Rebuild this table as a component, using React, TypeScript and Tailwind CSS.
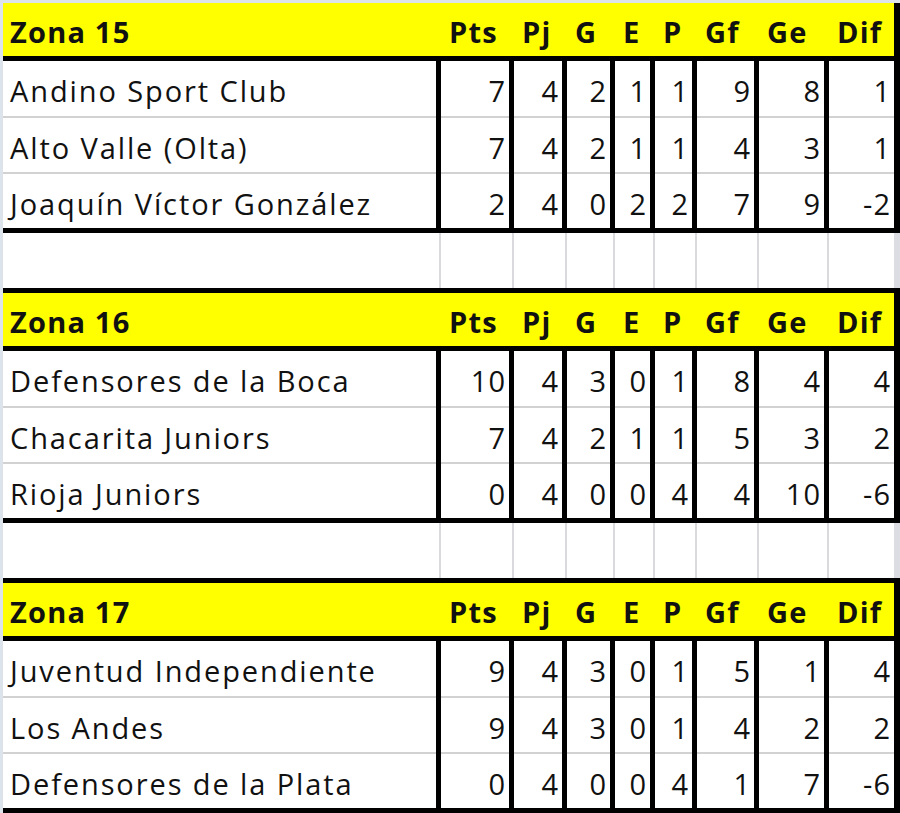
type Row = { name: string; stats: number[] };
type Zone = { title: string; rows: Row[] };

const zones: Zone[] = [
  {
    title: 'Zona 15',
    rows: [
      { name: 'Andino Sport Club', stats: [7, 4, 2, 1, 1, 9, 8, 1] },
      { name: 'Alto Valle (Olta)', stats: [7, 4, 2, 1, 1, 4, 3, 1] },
      { name: 'Joaquín Víctor González', stats: [2, 4, 0, 2, 2, 7, 9, -2] },
    ],
  },
  {
    title: 'Zona 16',
    rows: [
      { name: 'Defensores de la Boca', stats: [10, 4, 3, 0, 1, 8, 4, 4] },
      { name: 'Chacarita Juniors', stats: [7, 4, 2, 1, 1, 5, 3, 2] },
      { name: 'Rioja Juniors', stats: [0, 4, 0, 0, 4, 4, 10, -6] },
    ],
  },
  {
    title: 'Zona 17',
    rows: [
      { name: 'Juventud Independiente', stats: [9, 4, 3, 0, 1, 5, 1, 4] },
      { name: 'Los Andes', stats: [9, 4, 3, 0, 1, 4, 2, 2] },
      { name: 'Defensores de la Plata', stats: [0, 4, 0, 0, 4, 1, 7, -6] },
    ],
  },
];

const labels = ['Pts', 'Pj', 'G', 'E', 'P', 'Gf', 'Ge', 'Dif'];
// column widths including the 5px black divider on the left
const colW = ['w-[73px]', 'w-[53px]', 'w-[48px]', 'w-[40px]', 'w-[42px]', 'w-[62px]', 'w-[70px]', 'w-[70px]'];
// blank spacer row: gray gridlines sit on the right side of each column
const blankW = ['w-[73px]', 'w-[53px]', 'w-[48px]', 'w-[40px]', 'w-[42px]', 'w-[62px]', 'w-[70px]'];
const rowH = ['h-[57px] border-b-2', 'h-[56px] border-b-2', 'h-[54px]'];

function Header({ title }: { title: string }) {
  return (
    <div className="flex h-[53px] bg-[#ffff00] font-bold tracking-[1.2px]">
      <div className="w-[433px] pl-[7px] pt-[14px] leading-none">{title}</div>
      {labels.map((l, i) => (
        <div key={l} className={`${colW[i]} pl-[13px] pt-[14px] leading-none`}>
          {l}
        </div>
      ))}
      <div className="w-[6px] bg-black" />
    </div>
  );
}

function Body({ rows }: { rows: Row[] }) {
  return (
    <div className="flex bg-white">
      <div className="flex w-[433px] flex-col tracking-[1.9px]">
        {rows.map((r, i) => (
          <div key={r.name} className={`${rowH[i]} border-[#d2d2d2] pl-[7px] pt-[15px] leading-none`}>
            {r.name}
          </div>
        ))}
      </div>
      {colW.map((w, c) => (
        <div key={c} className={`${w} flex flex-col border-l-[5px] border-black tracking-[1px]`}>
          {rows.map((r, i) => (
            <div key={i} className={`${rowH[i]} border-b-[#d2d2d2] pr-[3px] pt-[15px] text-right leading-none`}>
              {r.stats[c]}
            </div>
          ))}
        </div>
      ))}
      <div className="w-[6px] bg-black" />
    </div>
  );
}

function Blank() {
  return (
    <div className="flex h-[55px] bg-white">
      <div className="w-[438px] border-r-2 border-[#d9d9de]" />
      {blankW.map((w, i) => (
        <div key={i} className={`${w} border-r-2 border-[#d9d9de]`} />
      ))}
      <div className="w-[65px]" />
      <div className="w-[6px] bg-[#dcdde3]" />
    </div>
  );
}

export default function App() {
  return (
    <div
      className="h-[813px] w-[900px] overflow-hidden bg-[#dde3eb] pl-[3px] pt-[3px] text-[29px] text-[#111]"
      style={{ fontFamily: '"Open Sans", "Noto Sans", sans-serif' }}
    >
      {zones.map((z, i) => (
        <div key={z.title}>
          {i > 0 && <div className="h-[5px] bg-black" />}
          <Header title={z.title} />
          <div className="h-[5px] bg-black" />
          <Body rows={z.rows} />
          <div className="h-[5px] bg-black" />
          {i < zones.length - 1 && <Blank />}
        </div>
      ))}
    </div>
  );
}
